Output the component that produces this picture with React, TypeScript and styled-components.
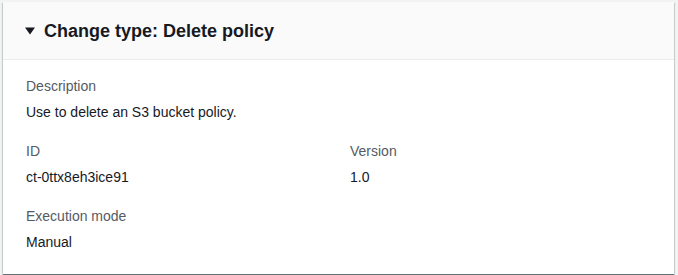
import styled, { createGlobalStyle } from 'styled-components';

const GlobalStyle = createGlobalStyle`
  html, body {
    margin: 0;
    padding: 0;
    background: #f2f3f3;
  }
  body {
    font-family: 'Liberation Sans', Arial, sans-serif;
    color: #16191f;
  }
`;

const Page = styled.main`
  padding: 2px 4px 3px 3px;
`;

const Card = styled.section`
  background: #ffffff;
  box-shadow: 0 1px 1px 0 rgba(0, 28, 36, 0.5), 1px 1px 1px 0 rgba(0, 28, 36, 0.1),
    -1px 1px 1px 0 rgba(0, 28, 36, 0.1);
`;

const Header = styled.header`
  display: flex;
  align-items: center;
  gap: 9px;
  height: 57px;
  padding: 0 20px 0 22px;
  background: #fafafa;
  border-bottom: 1px solid #eaeded;
`;

const Title = styled.h2`
  margin: 0;
  font-size: 18px;
  font-weight: 700;
  line-height: 22px;
  color: #16191f;
`;

const Body = styled.div`
  display: grid;
  grid-template-columns: 1fr 1fr;
  column-gap: 20px;
  row-gap: 17px;
  padding: 15px 20px 21px 23px;
`;

const Field = styled.div<{ $full?: boolean }>`
  display: flex;
  flex-direction: column;
  gap: 4px;
  grid-column: ${({ $full }) => ($full ? '1 / -1' : 'auto')};
`;

const Label = styled.div`
  font-size: 14px;
  line-height: 22px;
  color: #545b64;
`;

const Value = styled.div`
  font-size: 14px;
  line-height: 22px;
  color: #16191f;
`;

const Caret = () => (
  <svg width="10" height="10" viewBox="0 0 10 10" aria-hidden="true">
    <path d="M0 1.5h10L5 8.5z" fill="#16191f" />
  </svg>
);

const fields = [
  { label: 'Description', value: 'Use to delete an S3 bucket policy.', full: true },
  { label: 'ID', value: 'ct-0ttx8eh3ice91' },
  { label: 'Version', value: '1.0' },
  { label: 'Execution mode', value: 'Manual', full: true },
];

const App = () => {
  return (
    <>
      <GlobalStyle />
      <Page>
        <Card>
          <Header>
            <Caret />
            <Title>Change type: Delete policy</Title>
          </Header>
          <Body>
            {fields.map((f) => (
              <Field key={f.label} $full={f.full}>
                <Label>{f.label}</Label>
                <Value>{f.value}</Value>
              </Field>
            ))}
          </Body>
        </Card>
      </Page>
    </>
  );
};

export default App;
